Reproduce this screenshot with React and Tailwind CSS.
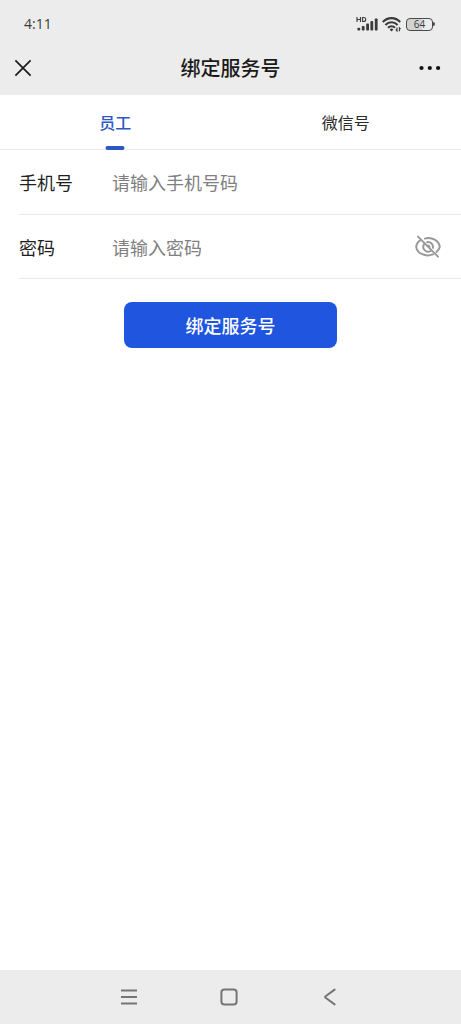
import { useState } from "react";

const tabs = [
  { key: "staff", label: "员工" },
  { key: "wechat", label: "微信号" },
];

function StatusBar() {
  return (
    <div className="flex h-10 items-center justify-between pt-2 pr-[26px] pl-6 text-[#3a3a3a]">
      <span className="font-['Open_Sans',sans-serif] text-sm leading-5 font-medium">4:11</span>
      <div className="flex items-center gap-1">
        <svg width="22" height="16" viewBox="0 0 22 16" fill="currentColor" aria-hidden="true">
          <g fill="none" stroke="currentColor" strokeWidth="1.1">
            <path d="M1 1v5M4.5 1v5M1 3.5h3.5M6.6 1.5v4h1.1a2 2 0 0 0 0-4z" />
          </g>
          <rect x="1.4" y="11.8" width="2.8" height="2.8" rx="0.8" />
          <rect x="5.8" y="10" width="2.8" height="4.6" rx="0.8" />
          <rect x="10.2" y="7.5" width="2.8" height="7.1" rx="0.8" />
          <rect x="14.4" y="5" width="2.8" height="9.6" rx="0.8" />
          <rect x="18.8" y="2.4" width="2.8" height="12.2" rx="0.8" />
        </svg>
        <svg width="20" height="16" viewBox="0 0 20 16" fill="none" stroke="currentColor" aria-hidden="true">
          <g strokeWidth="2.1">
            <path d="M0.8 6C5.6 0.8 13.4 0.8 18.2 6" />
            <path d="M3.4 9c3.5-3.7 8.7-3.7 12.2 0" />
            <path d="M6 11.8c2-2.1 5-2.1 7 0" />
          </g>
          <path d="M7.6 13.4a2.6 2.6 0 0 1 3.8 0L9.5 15.6z" fill="currentColor" stroke="none" />
          <path d="M15 11.5V15l-1.2-1.3M17.4 15.3v-3.5l1.2 1.3" strokeWidth="1.1" />
        </svg>
        <div className="flex items-center">
          <div className="flex h-[13px] w-[27px] items-center justify-center rounded-[4px] border border-[#4a4a4a] bg-linear-to-r from-[#d2d2d2] from-60% to-transparent to-60%">
            <span className="font-['Open_Sans',sans-serif] text-[10px] leading-[10px] font-medium">64</span>
          </div>
          <div className="h-1 w-0.5 rounded-r-sm bg-[#4a4a4a]" />
        </div>
      </div>
    </div>
  );
}

function TitleBar() {
  return (
    <header className="flex h-[55px] items-center justify-between px-3.5 text-[#1a1a1a]">
      <button type="button" aria-label="关闭" className="flex w-7">
        <svg width="18" height="18" viewBox="0 0 18 18" fill="none" stroke="currentColor" strokeWidth="1.7">
          <path d="M1.4 1.4l15.2 15.2M16.6 1.4L1.4 16.6" />
        </svg>
      </button>
      <h1 className="text-xl font-medium">绑定服务号</h1>
      <button type="button" aria-label="更多" className="flex w-7">
        <svg width="22" height="6" viewBox="0 0 22 6" fill="#111" className="shrink-0">
          <circle cx="2.5" cy="3" r="2.1" />
          <circle cx="10.8" cy="3" r="2.1" />
          <circle cx="19.1" cy="3" r="2.1" />
        </svg>
      </button>
    </header>
  );
}

function EyeOffIcon() {
  return (
    <svg
      width="26"
      height="24"
      viewBox="0 0 26 24"
      fill="none"
      stroke="#999"
      strokeWidth="2"
      strokeLinecap="round"
    >
      <path d="M3 1.6l20 20" />
      <path d="M9.8 3.6C17 1.6 24 5.8 24.8 11.8c-.4 2-1.6 3.8-3.4 5.2" />
      <path d="M5.4 5.2C2.8 7 1.4 9.2 1.2 11.8c1 6.8 9.2 10.4 16.8 7.6" />
      <path d="M12.2 7.2a4.9 4.9 0 0 1 5.8 5.6" />
      <path d="M9 9.2a4.9 4.9 0 0 0 6.6 6.8" />
      <path d="M13 10.2a2 2 0 0 1 1.8 1.8" strokeWidth="1.4" />
    </svg>
  );
}

function NavBar() {
  return (
    <nav className="flex h-[54px] items-center justify-center gap-20 bg-[#ececec] pr-1 text-[#757575]">
      <button type="button" aria-label="菜单">
        <svg width="20" height="20" viewBox="0 0 20 20" fill="none" stroke="currentColor" strokeWidth="1.8">
          <path d="M2 3.5h16M2 10h16M2 16.5h16" />
        </svg>
      </button>
      <button type="button" aria-label="主页">
        <svg width="20" height="20" viewBox="0 0 20 20" fill="none" stroke="currentColor" strokeWidth="2">
          <rect x="2.4" y="2.4" width="15.2" height="15.2" rx="3" />
        </svg>
      </button>
      <button type="button" aria-label="返回">
        <svg
          width="20"
          height="20"
          viewBox="0 0 20 20"
          fill="none"
          stroke="currentColor"
          strokeWidth="2"
          strokeLinecap="round"
          strokeLinejoin="round"
        >
          <path d="M15.6 2.6L6.6 9.2q-1 .8 0 1.6l9 6.6" />
        </svg>
      </button>
    </nav>
  );
}

export default function App() {
  const [activeTab, setActiveTab] = useState("staff");
  const [phone, setPhone] = useState("");
  const [password, setPassword] = useState("");
  const [showPassword, setShowPassword] = useState(false);

  return (
    <div className="flex min-h-screen flex-col bg-white font-['Noto_Sans_CJK_SC',sans-serif] text-[#1f1f1f]">
      <div className="bg-[#ececec]">
        <StatusBar />
        <TitleBar />
      </div>

      <main className="flex-1">
        <div role="tablist" className="flex h-[55px] border-b border-[#ebebeb]">
          {tabs.map((tab) => (
            <button
              key={tab.key}
              type="button"
              role="tab"
              aria-selected={activeTab === tab.key}
              onClick={() => setActiveTab(tab.key)}
              className={`relative flex-1 text-base ${
                activeTab === tab.key ? "font-medium text-[#2b57c8]" : "text-[#2a2a2a]"
              }`}
            >
              {tab.label}
              {activeTab === tab.key && (
                <span className="absolute -bottom-px left-1/2 h-1 w-[19px] -translate-x-1/2 rounded-full bg-[#2b57c8]" />
              )}
            </button>
          ))}
        </div>

        <form onSubmit={(e) => e.preventDefault()}>
          <div className="ml-[19px] flex h-[65px] items-center border-b border-[#ebebeb] text-lg">
            <label htmlFor="phone" className="w-[93px]">
              手机号
            </label>
            <input
              id="phone"
              type="tel"
              placeholder="请输入手机号码"
              value={phone}
              onChange={(e) => setPhone(e.target.value)}
              className="min-w-0 flex-1 outline-none placeholder:text-[#808080]"
            />
          </div>
          <div className="ml-[19px] flex h-16 items-center border-b border-[#ebebeb] pr-5 text-lg">
            <label htmlFor="password" className="w-[93px]">
              密码
            </label>
            <input
              id="password"
              type={showPassword ? "text" : "password"}
              placeholder="请输入密码"
              value={password}
              onChange={(e) => setPassword(e.target.value)}
              className="min-w-0 flex-1 outline-none placeholder:text-[#808080]"
            />
            <button type="button" aria-label="显示密码" onClick={() => setShowPassword(!showPassword)}>
              <EyeOffIcon />
            </button>
          </div>

          <button
            type="submit"
            className="mx-auto mt-[23px] block h-[46px] w-[46%] rounded-lg bg-[#1f55df] text-lg font-medium text-white"
          >
            绑定服务号
          </button>
        </form>
      </main>

      <NavBar />
    </div>
  );
}
